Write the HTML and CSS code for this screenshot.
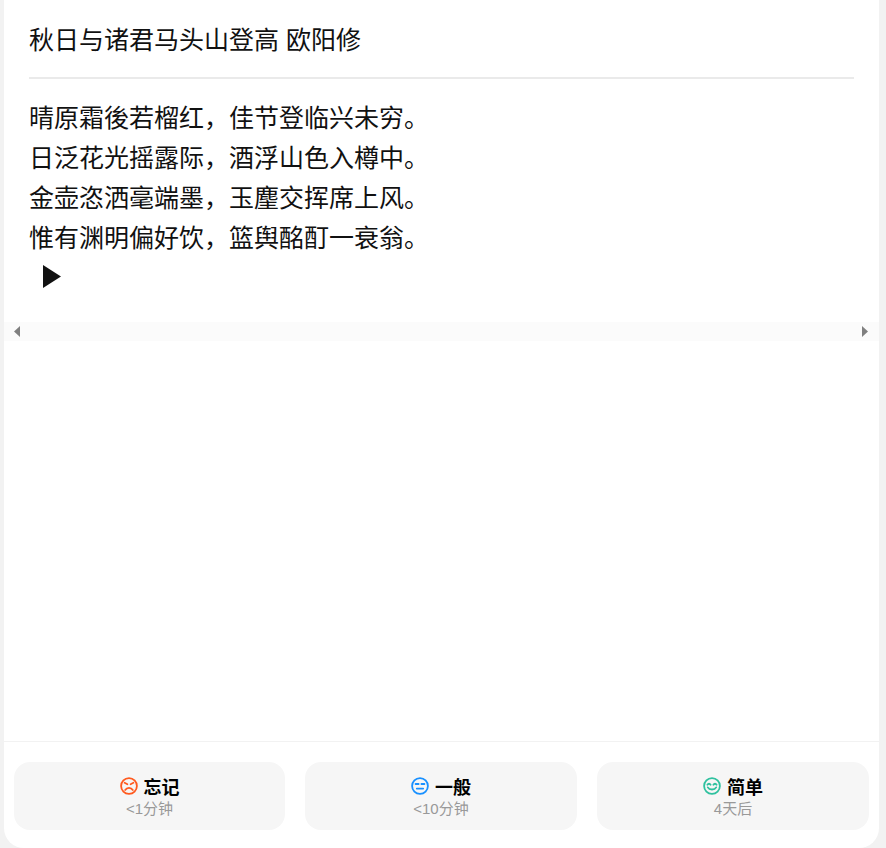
FILE: index.html
```html
<!DOCTYPE html>
<html lang="zh-CN">
<head>
<meta charset="utf-8">
<title>秋日与诸君马头山登高</title>
<link rel="stylesheet" href="styles.css">
</head>
<body>
<main class="card">
  <section class="content">
    <h1 class="title">秋日与诸君马头山登高 欧阳修</h1>
    <hr class="rule">
    <div class="poem">
      <p class="line">晴原霜後若榴红，佳节登临兴未穷。</p>
      <p class="line">日泛花光摇露际，酒浮山色入樽中。</p>
      <p class="line">金壶恣洒毫端墨，玉麈交挥席上风。</p>
      <p class="line">惟有渊明偏好饮，篮舆酩酊一衰翁。</p>
    </div>
    <button class="play" aria-label="播放">
      <svg class="play-icon" viewBox="0 0 18 23"><path d="M0 0 18 11.5 0 23Z"/></svg>
    </button>
  </section>
  <div class="scrollbar">
    <svg class="arrow" viewBox="0 0 6 11"><path d="M6 0V11L0 5.5Z"/></svg>
    <svg class="arrow" viewBox="0 0 6 11"><path d="M0 0V11L6 5.5Z"/></svg>
  </div>
  <footer class="footer">
    <button class="answer">
      <span class="answer-main">
        <svg class="face face-red" viewBox="0 0 18 18"><circle cx="9" cy="9" r="7.9"/><path d="M4.6 5.8 7.4 7.2M13.4 5.8 10.6 7.2M5.2 13C7 10.2 11 10.2 12.8 13"/></svg>
        <span class="answer-label">忘记</span>
      </span>
      <span class="answer-time">&lt;1分钟</span>
    </button>
    <button class="answer">
      <span class="answer-main">
        <svg class="face face-blue" viewBox="0 0 18 18"><circle cx="9" cy="9" r="7.9"/><path d="M4.6 7H7.6M10.4 7H13.4M5.8 11.6H12.2"/></svg>
        <span class="answer-label">一般</span>
      </span>
      <span class="answer-time">&lt;10分钟</span>
    </button>
    <button class="answer">
      <span class="answer-main">
        <svg class="face face-green" viewBox="0 0 18 18"><circle cx="9" cy="9" r="7.9"/><path d="M4.4 7.8C5.2 6.4 6.8 6.4 7.6 7.8M10.4 7.8C11.2 6.4 12.8 6.4 13.6 7.8M4.8 10.4C6.4 13.2 11.6 13.2 13.2 10.4"/></svg>
        <span class="answer-label">简单</span>
      </span>
      <span class="answer-time">4天后</span>
    </button>
  </footer>
</main>
</body>
</html>
```
FILE: styles.css
```css
* { box-sizing: border-box; }
html, body { margin: 0; height: 100%; }
body {
  background: #f2f2f2;
  padding: 0 7px 0 4px;
  font-family: "Liberation Sans", "Noto Sans CJK SC", sans-serif;
  overflow: hidden;
}
.card {
  height: 848px;
  background: #fff;
  border-radius: 0 0 20px 20px;
  display: flex;
  flex-direction: column;
  overflow: hidden;
}
.content {
  height: 322px;
  padding: 20px 25px 0;
  color: #111;
}
.title {
  margin: 0;
  font-size: 25px;
  font-weight: 400;
  line-height: 40px;
}
.rule {
  margin: 17px 0 0;
  height: 2px;
  border: 0;
  background: #eaeaea;
}
.poem { margin-top: 19px; }
.line {
  margin: 0;
  font-size: 25px;
  line-height: 40px;
}
.play {
  display: flex;
  margin: 7px 0 0 13.5px;
  padding: 0;
  border: 0;
  background: none;
}
.play-icon { width: 18px; height: 23px; fill: #111; }
.scrollbar {
  height: 19px;
  background: #fbfbfb;
  display: flex;
  justify-content: space-between;
  align-items: center;
  padding: 0 11px 0 10px;
}
.arrow { width: 6px; height: 11px; fill: #808080; }
.footer {
  margin-top: auto;
  height: 107px;
  border-top: 1px solid #f2f2f2;
  padding: 20px 10px 18px;
  display: grid;
  grid-template-columns: 271px 272px 272px;
  gap: 20px;
}
.answer {
  border: 0;
  border-radius: 16px;
  background: #f6f6f6;
  padding: 12px 0 0;
  font-family: inherit;
  display: flex;
  flex-direction: column;
  align-items: center;
  justify-content: flex-start;
}
.answer-main {
  display: flex;
  align-items: center;
  gap: 6px;
  height: 24px;
}
.face {
  width: 18px;
  height: 18px;
  fill: none;
  stroke-width: 1.8;
  stroke-linecap: round;
}
.face-red { stroke: #ff5a1f; }
.face-blue { stroke: #1890ff; }
.face-green { stroke: #2fc19f; }
.answer-label {
  font-size: 18px;
  font-weight: 700;
  color: #000;
  line-height: 24px;
  padding-top: 3px;
}
.answer-time {
  font-size: 15px;
  color: #999;
  line-height: 20px;
  padding-top: 1px;
}
```
